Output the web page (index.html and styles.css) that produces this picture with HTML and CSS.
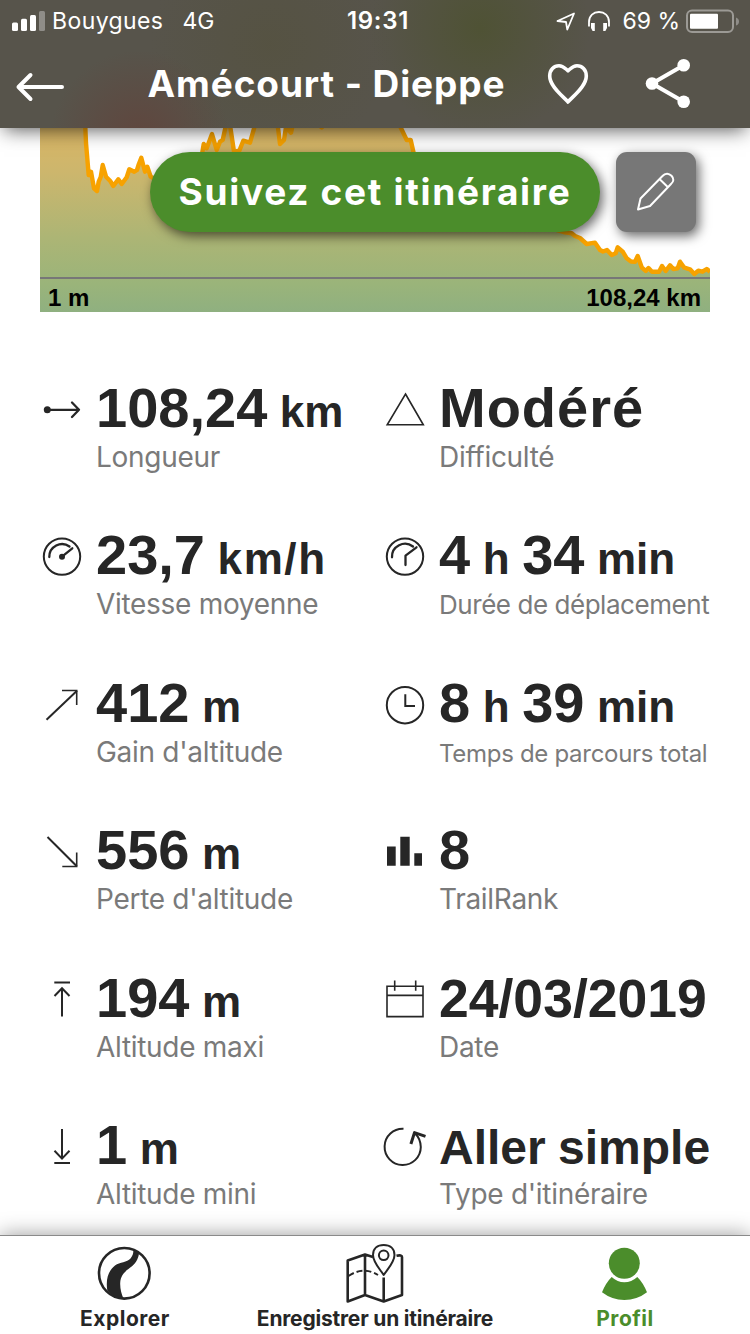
FILE: index.html
```html
<!DOCTYPE html>
<html lang="fr">
<head>
    <meta charset="UTF-8">
    <title>Amécourt - Dieppe</title>
    <link rel="stylesheet" href="styles.css">
</head>
<body>
    <header class="header">
        <!-- Status bar -->
        <div class="status">
            <div class="status-left">
                <svg class="signal" width="34" height="20" viewBox="0 0 34 20">
                    <rect x="0" y="11.5" width="6" height="8.5" rx="1.5"/>
                    <rect x="9" y="7.7" width="6" height="12.3" rx="1.5"/>
                    <rect x="18" y="4" width="6" height="16" rx="1.5"/>
                    <rect class="off" x="27" y="0" width="6" height="20" rx="1.5"/>
                </svg>
                <span class="carrier">Bouygues</span>
                <span class="network">4G</span>
            </div>
            <div class="time">19:31</div>
            <div class="status-right">
                <svg class="line-icon location" width="20" height="20" viewBox="0 0 20 20">
                    <path d="M1.5 10 L18 2.5 L11.3 18.5 L10 11 Z"/>
                </svg>
                <svg class="headphones" width="22" height="20" viewBox="0 0 22 20">
                    <path class="band" d="M1 15.5 V11 C1 4.5 5.5 1 11 1 C16.5 1 21 4.5 21 11 V15.5"/>
                    <path d="M3 12 H6.8 V20 H4.6 L3 17 Z M19 12 H15.2 V20 H17.4 L19 17 Z"/>
                </svg>
                <span class="percent">69 %</span>
                <svg class="battery" width="53" height="24" viewBox="0 0 53 24">
                    <rect class="case" x="1" y="1.5" width="46" height="21.5" rx="5"/>
                    <rect x="4" y="4.7" width="28" height="15" rx="1"/>
                    <path class="cap" d="M50 8.5 Q53 9.5 53 12.5 Q53 15.5 50 16.5 Z"/>
                </svg>
            </div>
        </div>

        <!-- Title bar -->
        <div class="nav">
            <svg class="nav-icon" width="48" height="48" viewBox="0 0 48 48">
                <path d="M2.5 27 H46 M14.5 15 L2.5 27 L14.5 39"/>
            </svg>
            <h1 class="title">Amécourt - Dieppe</h1>
            <svg class="nav-icon heart" width="44" height="48" viewBox="0 0 44 48">
                <path d="M22 42 C18 37 3.7 27 3.7 16 C3.7 9.5 8 5.7 13 5.7 C17.5 5.7 19 8.5 22 10.8 C25 8.5 26.5 5.7 31 5.7 C36 5.7 40.3 9.5 40.3 16 C40.3 27 26 37 22 42 Z"/>
            </svg>
            <svg class="nav-icon share" width="48" height="48" viewBox="0 0 48 48">
                <path d="M39.7 5.3 L8 23.5 L39.7 41.7"/>
                <circle cx="39.7" cy="5.3" r="6.3"/>
                <circle cx="8" cy="23.5" r="6.3"/>
                <circle cx="39.7" cy="41.7" r="6.3"/>
            </svg>
        </div>
    </header>

    <main class="content">
        <!-- Elevation profile -->
        <section class="profile">
            <svg class="elevation" width="670" height="184" viewBox="0 0 670 184">
                <defs>
                    <linearGradient id="ground" x1="0" y1="0" x2="0" y2="184" gradientUnits="userSpaceOnUse">
                        <stop offset="0" stop-color="#dab665"/>
                        <stop offset="0.25" stop-color="#ccb66d"/>
                        <stop offset="0.6" stop-color="#acb575"/>
                        <stop offset="0.85" stop-color="#9ab47a"/>
                        <stop offset="1" stop-color="#8fb080"/>
                    </linearGradient>
                </defs>
                <path class="area" d="M0 -8 H45 L46 15 L48.7 47 L51 43.7 L54 60.3 L57 63 L58.7 53.7 L60.7 49 L62.7 37 L66 48.7 L70 52.7 L73.3 58 L78.3 51.3 L81.7 56 L86.7 49.3 L89.3 41.3 L94.3 43.7 L101.3 29.7 L105 43.7 L107.3 38.7 L110.7 48.7 L130 60 L161.7 28 L163.7 16 L166.7 20.3 L172 6 L176.7 22 L180 13.7 L182.7 12 L186 -3 H190 L194 23.7 L199.3 22.7 L203.3 12.7 L210 14.7 L215 -3 H237.7 L240 16 L244 12 L246 -1 L251 4.7 L253 -3 H360 L366.7 12 L370.7 12 L373.7 25.3 L440 80 L525 104.3 L531.7 105.3 L535 108 L546.7 116 L555 114.7 L560 122 L567 122 L571.7 127 L575.7 125.3 L577.7 119.3 L586.7 130.3 L595 133.7 L597.7 128 L601.7 139.3 L605.7 143 L619 143.7 L622 138 L625.7 143 L630 137.3 L633.3 141 L637.7 140.3 L640 133.7 L644.3 139.7 L650 141.3 L654.3 146 L658.3 142.7 L666.7 141 L670 143.7 V184 H0 Z"/>
                <path class="track" d="M45 -8 L46 15 L48.7 47 L51 43.7 L54 60.3 L57 63 L58.7 53.7 L60.7 49 L62.7 37 L66 48.7 L70 52.7 L73.3 58 L78.3 51.3 L81.7 56 L86.7 49.3 L89.3 41.3 L94.3 43.7 L97 42 L98.7 36.5 L101.3 29.7 L105 43.7 L107.3 38.7 L110.7 48.7 L130 60 L161.7 28 L163.7 16 L166.7 20.3 L172 6 L176.7 22 L180 13.7 L182.7 12 L186 -3 H190 L194 23.7 L199.3 22.7 L203.3 12.7 L210 14.7 L215 -3 H237.7 L240 16 L244 12 L246 -1 L251 4.7 L253 -4 H278 L281.7 -0.5 L285 -4 H359 L366.7 12 L370.7 12 L373.7 25.3 L440 80 L525 104.3 L531.7 105.3 L535 108 L540 110 L546.7 116 L555 114.7 L560 122 L563 123.5 L567 122 L571.7 127 L575.7 125.3 L577.7 119.3 L583 124 L586.7 130.3 L591 133.5 L595 133.7 L597.7 128 L601.7 139.3 L605.7 143 L608.5 140 L612 143.7 L619 143.7 L622 138 L625.7 143 L630 137.3 L633.3 141 L637.7 140.3 L640 133.7 L644.3 139.7 L650 141.3 L654.3 146 L658.3 142.7 L662.5 143.7 L666.7 141 L670 143.7"/>
                <path class="axis" d="M0 150 H670"/>
            </svg>
            <div class="profile-labels">
                <span>1 m</span>
                <span>108,24 km</span>
            </div>
            <!-- Floating actions over the profile -->
            <div class="actions">
                <button class="follow">Suivez cet itinéraire</button>
                <button class="edit">
                    <svg width="80" height="80" viewBox="0 0 80 80">
                        <path d="M22 57.5 L24.5 46.5 L46.5 24 C49.5 20.5 53 21.3 55.5 23.8 C58 26.5 58 29.5 55 32 L34 54 Z M44 27.5 L52 35.3"/>
                    </svg>
                </button>
            </div>
        </section>

        <!-- Statistics -->
        <section class="stats">
            <div class="stat">
                <svg class="icon" viewBox="0 0 44 44">
                    <circle class="solid" cx="7.3" cy="21.8" r="3.5"/>
                    <path class="medium" d="M7 21.8 H39 M32 14.5 L39 21.8 L32 29"/>
                </svg>
                <div>
                    <div class="value">108,24 <small>km</small></div>
                    <div class="label">Longueur</div>
                </div>
            </div>
            <div class="stat">
                <svg class="icon" viewBox="0 0 44 44">
                    <path class="thin" d="M22.5 6 L40.3 36.8 H4.2 Z"/>
                </svg>
                <div>
                    <div class="value value-text">Modéré</div>
                    <div class="label">Difficulté</div>
                </div>
            </div>
            <div class="stat">
                <svg class="icon" viewBox="0 0 44 44">
                    <circle cx="22" cy="21.6" r="18.2"/>
                    <path class="medium" d="M9.3 22 A12.8 12.8 0 0 1 29.5 11.5 M22 21.6 L32.3 13.3"/>
                    <circle class="solid" cx="22" cy="21.8" r="3"/>
                </svg>
                <div>
                    <div class="value">23,7 <small class="speed">km/h</small></div>
                    <div class="label">Vitesse moyenne</div>
                </div>
            </div>
            <div class="stat">
                <svg class="icon" viewBox="0 0 44 44">
                    <circle cx="22" cy="21.6" r="18.2"/>
                    <path class="medium" d="M9 22.3 A13 13 0 0 1 30 11.5 M33.5 12.3 L22.5 20.7 V30"/>
                </svg>
                <div>
                    <div class="value">4 <small>h</small> 34 <small>min</small></div>
                    <div class="label"><span class="label-md">Durée de déplacement</span></div>
                </div>
            </div>
            <div class="stat">
                <svg class="icon" viewBox="0 0 44 44">
                    <path d="M6.5 36.8 L37 7.8"/>
                    <path class="thin" d="M22 7.5 H36.7 V21.9"/>
                </svg>
                <div>
                    <div class="value">412 <small>m</small></div>
                    <div class="label">Gain d'altitude</div>
                </div>
            </div>
            <div class="stat">
                <svg class="icon" viewBox="0 0 44 44">
                    <circle cx="22" cy="22.2" r="18.2"/>
                    <path d="M22.3 11.3 V22.9 H32"/>
                </svg>
                <div>
                    <div class="value">8 <small>h</small> 39 <small>min</small></div>
                    <div class="label"><span class="label-sm">Temps de parcours total</span></div>
                </div>
            </div>
            <div class="stat">
                <svg class="icon" viewBox="0 0 44 44">
                    <path d="M7.5 7 L36.8 36.3"/>
                    <path class="thin" d="M22.3 36.5 H36.7 V22.4"/>
                </svg>
                <div>
                    <div class="value">556 <small>m</small></div>
                    <div class="label">Perte d'altitude</div>
                </div>
            </div>
            <div class="stat">
                <svg class="icon" viewBox="0 0 44 44">
                    <path class="solid" d="M4 16.6 H12.7 V35.7 H4 Z M17.3 6.8 H26.7 V35.7 H17.3 Z M31.3 23.2 H39 V35.7 H31.3 Z"/>
                </svg>
                <div>
                    <div class="value">8</div>
                    <div class="label">TrailRank</div>
                </div>
            </div>
            <div class="stat">
                <svg class="icon" viewBox="0 0 44 44">
                    <path d="M14.3 4.4 H30 M22 10.5 V38.4 M14.5 18 L22 10.3 L29.5 18"/>
                </svg>
                <div>
                    <div class="value">194 <small>m</small></div>
                    <div class="label">Altitude maxi</div>
                </div>
            </div>
            <div class="stat">
                <svg class="icon" viewBox="0 0 44 44">
                    <path class="thin" d="M4 8.2 H40 V38.6 H4 Z M4 17.4 H40 M11.7 2.4 V12.7 M32.7 2.4 V12.7"/>
                </svg>
                <div>
                    <div class="value"><span class="value-md">24/03/2019</span></div>
                    <div class="label">Date</div>
                </div>
            </div>
            <div class="stat">
                <svg class="icon" viewBox="0 0 44 44">
                    <path d="M14.3 38 H30 M22 4 V33.5 M14.5 25.8 L22 33.6 L29.5 25.8"/>
                </svg>
                <div>
                    <div class="value">1 <small>m</small></div>
                    <div class="label">Altitude mini</div>
                </div>
            </div>
            <div class="stat">
                <svg class="icon" viewBox="0 0 44 44">
                    <path d="M20.5 3.8 A18.1 18.1 0 1 0 37.8 22 Q37.5 13.5 32 8.5"/>
                    <path class="bold" d="M27.9 19 L31.5 7.6 L42.5 11.3"/>
                </svg>
                <div>
                    <div class="value"><span class="value-sm">Aller simple</span></div>
                    <div class="label">Type d'itinéraire</div>
                </div>
            </div>
        </section>
    </main>

    <!-- Tab bar -->
    <nav class="tabs">
        <a class="tab">
            <svg class="tab-icon" viewBox="0 0 60 60">
                <circle cx="29.3" cy="29.3" r="25.3"/>
                <path class="solid" d="M38.3 6 L44 8.5 C44 13 41.5 18.5 37 22.3 C32 26 25.5 30 25.2 39 C25 45 26.5 50 28.5 54.5 C21 54.5 15.5 50 12.3 46.5 C10.5 35 13.5 26.5 20 21.5 C25 18 32 18.5 35.5 14.5 C37.8 11.5 38.5 9 38.3 6 Z"/>
            </svg>
            <span class="tab-label">Explorer</span>
        </a>
        <a class="tab">
            <svg class="tab-icon" viewBox="0 0 60 60">
                <path d="M28 13 L20 10.5 L2.7 16.5 V57.5 L20 51 L38.7 57.5 L57 51 V13 Q57 10.5 51.5 11.8 M20 10.5 V51 M38.7 33.5 V57.5"/>
                <path class="dashed" d="M3.5 32 Q18 22 33 31"/>
                <path class="pin" d="M38.7 31 C34 24 28 18 28 11 C28 4.5 32.5 1 38.7 1 C45 1 49.5 4.5 49.5 11 C49.5 18 43.5 24 38.7 31 Z"/>
                <circle class="pin" cx="38.7" cy="11.3" r="4.8"/>
            </svg>
            <span class="tab-label tab-label-wide">Enregistrer un itinéraire</span>
        </a>
        <a class="tab active">
            <svg class="tab-icon" viewBox="0 0 60 60">
                <circle class="solid" cx="29.3" cy="19.3" r="15.5"/>
                <path class="solid" d="M16.7 33 Q11 38.5 7 48.3 Q17 56 29.3 56 Q42 56 52 48.3 Q48 38.5 42.3 33 Q36.5 38.3 29.3 38.3 Q22.5 38.3 16.7 33 Z"/>
            </svg>
            <span class="tab-label">Profil</span>
        </a>
    </nav>
</body>
</html>
```
FILE: styles.css
```css
/* Basic Styles */
* {
    box-sizing: border-box;
}

body {
    display: flex;
    flex-direction: column;
    width: 750px;
    height: 1334px;
    margin: 0;
    overflow: hidden;
    background-color: #fff;
    color: #262626;
    font-family: Inter, sans-serif;
}

svg {
    display: block;
    flex: none;
    overflow: visible;
}

/* Header */
.header {
    position: relative;
    z-index: 2;
    flex: none;
    height: 128px;
    color: #fff;
    background:
        radial-gradient(circle at 140px 140px, rgba(98, 66, 58, 0.8), rgba(98, 66, 58, 0) 90px),
        radial-gradient(circle at 480px 28px, rgba(78, 82, 50, 0.9), rgba(78, 82, 50, 0) 110px),
        radial-gradient(circle at 270px 45px, rgba(85, 82, 64, 0.8), rgba(85, 82, 64, 0) 120px),
        #57544b;
    box-shadow: 0 6px 18px -4px rgba(0, 0, 0, 0.65);
}

/* Status Bar */
.status {
    display: grid;
    grid-template-columns: 1fr auto 1fr;
    align-items: center;
    height: 40px;
    padding: 1px 11px 0 12px;
    font-size: 23px;
}

.status-left,
.status-right {
    display: flex;
    align-items: center;
}

.status-right {
    justify-content: flex-end;
}

.signal,
.headphones,
.battery {
    fill: #fff;
}

.signal .off,
.battery .cap {
    fill: #8f8d88;
}

.battery .case {
    fill: none;
    stroke: #9c9a95;
    stroke-width: 2;
}

.headphones .band {
    fill: none;
    stroke: #fff;
    stroke-width: 1.8;
}

.line-icon {
    fill: none;
    stroke: #fff;
    stroke-width: 1.8;
    stroke-linejoin: round;
}

.carrier {
    margin-left: 6px;
    letter-spacing: 0.4px;
}

.network {
    margin-left: 19px;
}

.time {
    margin-left: 5px;
    font-size: 24px;
    font-weight: 600;
    letter-spacing: 0.7px;
}

.location {
    margin-right: 12px;
}

.percent {
    margin: 0 6px 0 12px;
}

/* Title Bar */
.nav {
    display: flex;
    align-items: center;
    height: 88px;
    padding-left: 16px;
}

.nav-icon {
    fill: none;
    stroke: #fff;
    stroke-width: 4;
    stroke-linecap: round;
    stroke-linejoin: round;
}

.title {
    width: 439px;
    margin: 0 0 0 43px;
    font-size: 37px;
    font-weight: 700;
    line-height: 48px;
    text-align: center;
    white-space: nowrap;
    letter-spacing: 0.9px;
}

.heart {
    stroke-width: 3.6;
}

.share {
    margin-left: 54px;
}

.share circle {
    fill: #fff;
    stroke: none;
}

/* Content */
.content {
    flex: 1;
    min-height: 0;
    overflow: hidden;
}

/* Elevation Profile */
.profile {
    position: relative;
    height: 184px;
    padding: 0 40px;
}

.elevation {
    overflow: hidden;
}

.area {
    fill: url(#ground);
}

.track {
    fill: none;
    stroke: #f7a200;
    stroke-width: 4.4;
    stroke-linejoin: round;
}

.axis {
    stroke: #777;
    stroke-width: 2;
}

.profile-labels {
    position: absolute;
    left: 48px;
    right: 49px;
    bottom: 0;
    display: flex;
    justify-content: space-between;
    color: #000;
    font-family: "Liberation Sans", Arial, sans-serif;
    font-size: 24px;
    font-weight: bold;
    line-height: 28px;
}

.actions {
    position: absolute;
    top: 24px;
    left: 150px;
    display: flex;
    gap: 16px;
}

.follow,
.edit {
    height: 80px;
    padding: 0;
    border: 0;
    color: #fff;
    box-shadow: 3px 4px 12px rgba(0, 0, 0, 0.6);
}

.follow {
    width: 450px;
    padding-bottom: 2px;
    border-radius: 40px;
    background-color: #4b8d2b;
    font-family: Inter, sans-serif;
    font-size: 37px;
    font-weight: 700;
    letter-spacing: 1.7px;
    white-space: nowrap;
}

.edit {
    width: 80px;
    border-radius: 11px;
    background-color: #777;
}

.edit svg {
    fill: none;
    stroke: #fff;
    stroke-width: 2;
    stroke-linejoin: round;
}

/* Statistics */
.stats {
    display: grid;
    grid-template-columns: 343px 343px;
    grid-auto-rows: 147.4px;
    padding: 68px 0 0 40px;
}

.stat {
    display: flex;
    align-items: flex-start;
    gap: 12px;
    white-space: nowrap;
}

.icon {
    width: 44px;
    height: 44px;
    margin-top: 8px;
    fill: none;
    stroke: #262626;
    stroke-width: 2;
}

.icon .thin {
    stroke-width: 1.6;
}

.icon .medium {
    stroke-width: 2.3;
    stroke-linecap: round;
    stroke-linejoin: round;
}

.icon .bold {
    stroke-width: 3;
    stroke-linejoin: round;
}

.icon .solid {
    fill: #262626;
    stroke: none;
}

.value {
    height: 56px;
    font-family: "Liberation Sans", Arial, sans-serif;
    font-size: 56px;
    font-weight: bold;
    line-height: 56px;
    word-spacing: -3px;
}

.value small {
    font-size: 44px;
}

.value .speed {
    letter-spacing: 1.6px;
}

.value-text {
    letter-spacing: 1px;
}

.value-md {
    font-size: 53.5px;
}

.value-sm {
    font-size: 48px;
    word-spacing: -1px;
}

.label {
    height: 34px;
    margin-top: 4px;
    color: #7a7a7a;
    font-size: 28px;
    line-height: 34px;
    letter-spacing: -0.3px;
}

.label-md {
    font-size: 26px;
    letter-spacing: -0.45px;
}

.label-sm {
    font-size: 24px;
}

/* Tab Bar */
.tabs {
    position: relative;
    z-index: 2;
    display: grid;
    grid-template-columns: repeat(3, 1fr);
    flex: none;
    height: 99px;
    border-top: 1px solid #8a8a8a;
    background-color: #fff;
    box-shadow: 0 0 20px rgba(0, 0, 0, 0.4);
}

.tab {
    display: flex;
    flex-direction: column;
    align-items: center;
    padding-top: 8px;
    color: #262626;
}

.tab.active {
    color: #4b8d2b;
}

.tab-icon {
    width: 60px;
    height: 60px;
    fill: none;
    stroke: currentColor;
    stroke-width: 2.6;
    stroke-linejoin: round;
}

.tab-icon .solid {
    fill: currentColor;
    stroke: none;
}

.tab-icon .dashed {
    stroke-width: 2;
    stroke-dasharray: 6 3;
}

.tab-icon .pin {
    stroke-width: 2;
}

.tab-label {
    margin-top: 1px;
    font-size: 21px;
    font-weight: 700;
    line-height: 28px;
    letter-spacing: 0.5px;
    white-space: nowrap;
}

.tab-label-wide {
    letter-spacing: -0.2px;
}
```
